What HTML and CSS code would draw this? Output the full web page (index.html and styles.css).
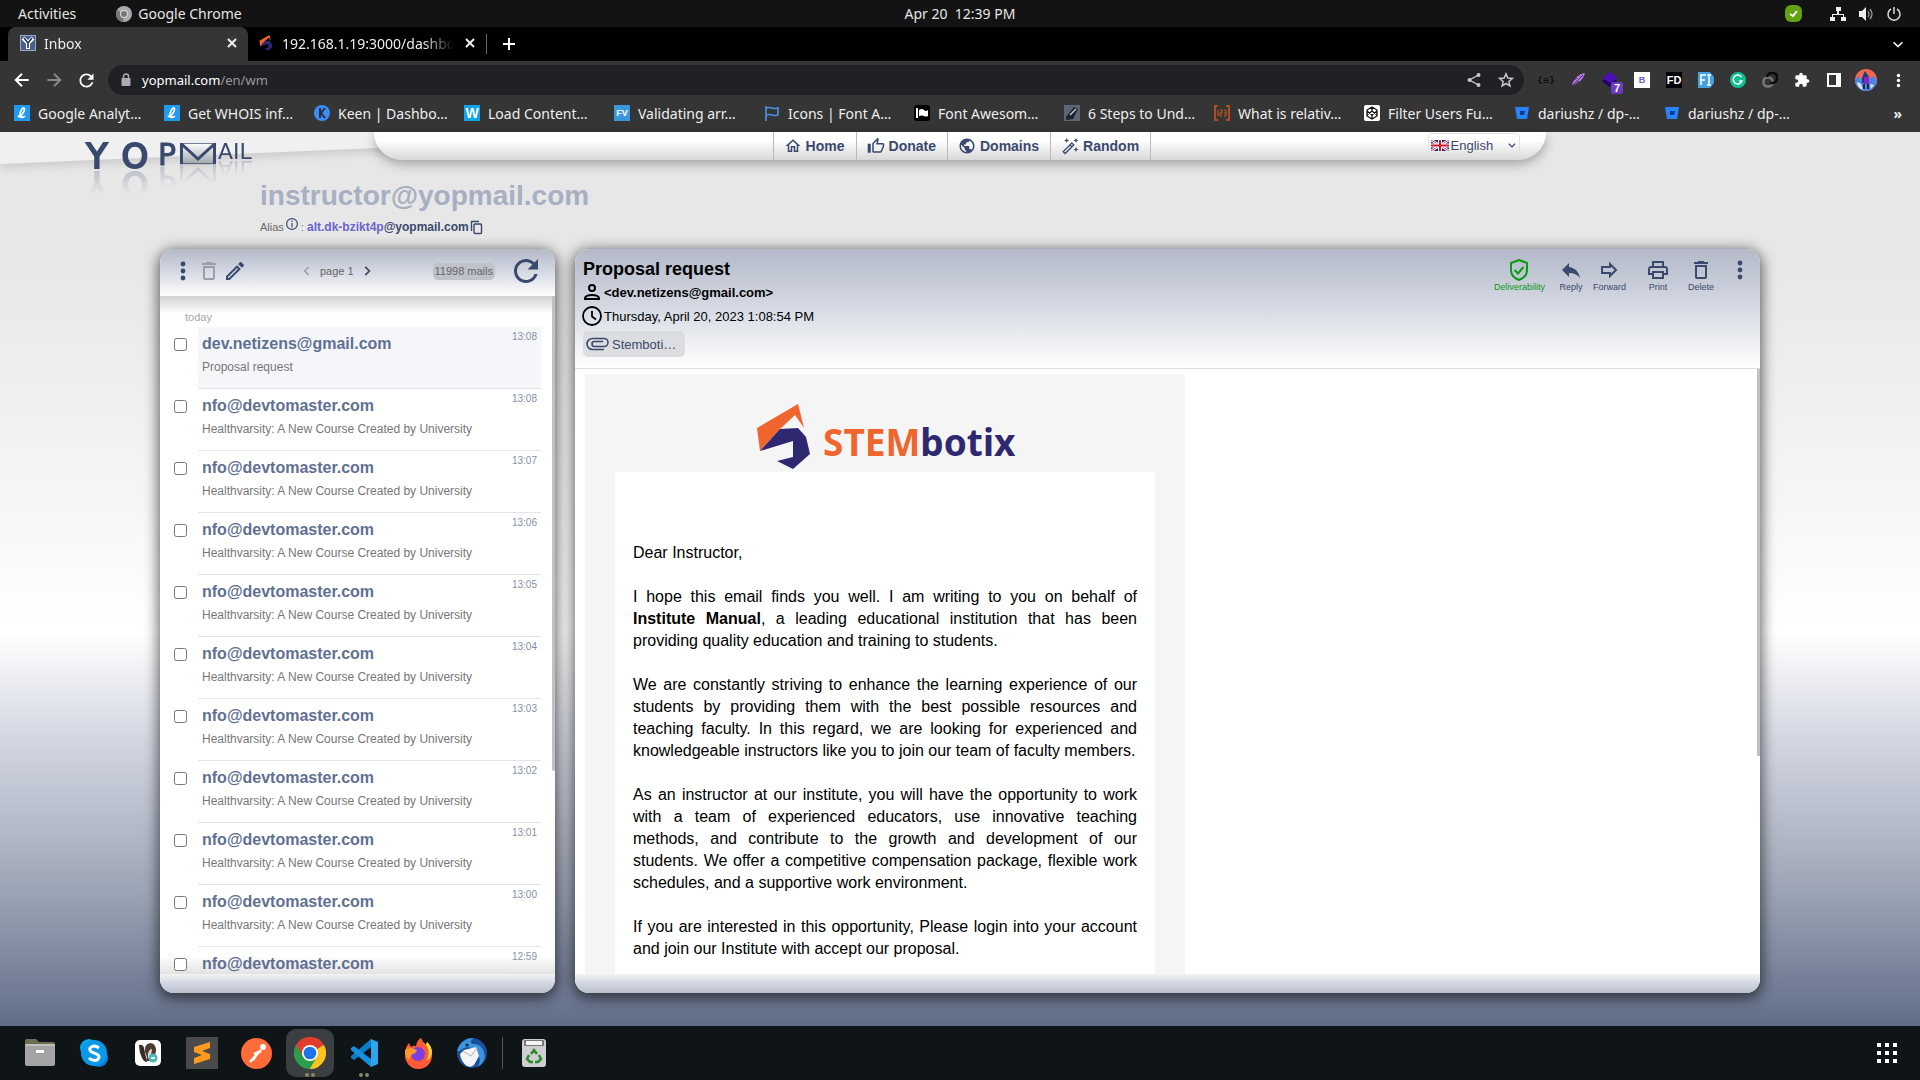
FILE: index.html
```html
<!DOCTYPE html>
<html lang="en">
<head>
<meta charset="utf-8">
<title>Inbox</title>
<link rel="stylesheet" href="styles.css">
</head>
<body>
<svg class="defs" aria-hidden="true">
  <symbol id="dots" viewBox="0 0 24 24"><circle cx="12" cy="5" r="2.4"/><circle cx="12" cy="12" r="2.4"/><circle cx="12" cy="19" r="2.4"/></symbol>
  <symbol id="trash" viewBox="0 0 24 24"><path d="M6 19c0 1.100.9 2 2 2h8c1.100 0 2-.9 2-2V7H6v12zM8 9h8v10H8V9zm7.500-5l-1-1h-5l-1 1H5v2h14V4h-3.500z"/></symbol>
  <symbol id="close" viewBox="0 0 16 16"><path d="M4 4l8 8M12 4l-8 8" fill="none" stroke="currentColor" stroke-width="2"/></symbol>
  <symbol id="left" viewBox="0 0 24 24"><path d="M15 5l-7 7 7 7" fill="none" stroke="currentColor" stroke-width="2.500"/></symbol>
  <symbol id="right" viewBox="0 0 24 24"><path d="M9 5l7 7-7 7" fill="none" stroke="currentColor" stroke-width="3"/></symbol>
  <symbol id="down" viewBox="0 0 16 16"><path d="M3 6l5 5 5-5" fill="none" stroke="currentColor" stroke-width="2"/></symbol>
  <symbol id="stem" viewBox="0 0 54 66"><path fill="#f0652d" d="M0 24L41 0l6 24-9-13L23 25 3 47z"/><path fill="#2e2870" d="M23 25l18-1 8 9 4 17-17 15-16-8 16-4V37L3 47z"/></symbol>
  <symbol id="bucket" viewBox="0 0 16 16"><path fill="#2684ff" d="M1 2h14l-2 12H3z"/><path fill="#123a80" d="M6 6h5l-1 4H6z"/></symbol>
  <symbol id="linkedl" viewBox="0 0 16 16"><rect width="16" height="16" fill="#1f9bf0"/><path d="M5 12c5-3 6-8 5-9S6 6 6 10c0 3 3 3 5 1M4 12c1-2 3-1 4 0" fill="none" stroke="#fff" stroke-width="1.700"/></symbol>
</svg>

<header class="sysbar">
  <div class="sys-left"><button>Activities</button>
    <button class="sys-app"><svg width="16" height="16" viewBox="0 0 16 16"><circle cx="8" cy="8" r="8" fill="#aaa"/><path d="M8 8L1 4a8 8 0 0 0 6 12z" fill="#777"/><circle cx="8" cy="8" r="4" fill="#ddd"/><circle cx="8" cy="8" r="3" fill="#777"/></svg>Google Chrome</button></div>
  <time>Apr 20&nbsp; 12:39 PM</time>
  <div class="sys-right">
    <svg class="skype-tray" width="17" height="17" viewBox="0 0 17 17"><rect width="17" height="17" rx="6" fill="#62a313"/><path d="M5 9l3 2 4-5" fill="none" stroke="#fff" stroke-width="2"/></svg>
    <svg width="16" height="16" viewBox="0 0 16 16" fill="#eee"><path d="M6 1h5v4H9v3h5v3h2v4h-5v-4h2V9H3v2h2v4H0v-4h2V8h5V5H6z"/></svg>
    <svg width="16" height="16" viewBox="0 0 16 16"><path d="M1 5h3l4-4v14l-4-4H1z" fill="#eee"/><path d="M10 5q2 3 0 6M12 3q4 5 0 10" fill="none" stroke="#999" stroke-width="1.300"/></svg>
    <svg width="16" height="16" viewBox="0 0 16 16"><path d="M5 3a6 6 0 1 0 6 0M8 1v7" fill="none" stroke="#ddd" stroke-width="1.500"/></svg>
  </div>
</header>

<nav class="tabs" aria-label="Browser tabs">
  <div class="tab active"><svg width="16" height="16" viewBox="0 0 16 16"><rect x=".5" y=".5" width="15" height="15" fill="#4a5f8c" stroke="#9aa8c4"/><path d="M3 3l5 5 5-5M8 8v6" fill="none" stroke="#fff" stroke-width="4"/><path d="M4 3l4 5 4-5M8 8v5" fill="none" stroke="#26365e" stroke-width="1.600"/></svg><span>Inbox</span><button aria-label="Close tab"><svg width="16" height="16"><use href="#close"/></svg></button></div>
  <div class="tab"><svg width="16" height="16"><use href="#stem"/></svg><span>192.168.1.19:3000/dashboard</span><button aria-label="Close tab"><svg width="16" height="16"><use href="#close"/></svg></button></div>
  <button class="new-tab" aria-label="New tab"><svg width="16" height="16" viewBox="0 0 16 16"><path d="M8 2v12M2 8h12" stroke="#fff" stroke-width="2"/></svg></button>
  <button class="tab-search" aria-label="Search tabs"><svg width="14" height="14"><use href="#down"/></svg></button>
</nav>

<div class="toolbar">
  <button aria-label="Back"><svg width="20" height="20" viewBox="0 0 24 24"><path d="M20 12H5M12 4.500L4.500 12l7.500 7.500" fill="none" stroke="#fff" stroke-width="2.300"/></svg></button>
  <button aria-label="Forward"><svg width="20" height="20" viewBox="0 0 24 24"><path d="M4 12h15M12 4.500l7.500 7.500-7.500 7.500" fill="none" stroke="#888" stroke-width="2.300"/></svg></button>
  <button aria-label="Reload"><svg width="21" height="21" viewBox="0 0 24 24" fill="#fff"><path d="M17.650 6.350C16.200 4.900 14.210 4 12 4c-4.420 0-7.990 3.580-7.990 8s3.570 8 7.990 8c3.730 0 6.840-2.550 7.730-6h-2.080c-.82 2.330-3.040 4-5.650 4-3.310 0-6-2.690-6-6s2.690-6 6-6c1.660 0 3.140.69 4.220 1.780L13 11h7V4l-2.350 2.350z"/></svg></button>
  <div class="omnibox">
    <svg width="12" height="14" viewBox="0 0 12 14"><rect x="1.500" y="5" width="9" height="8" rx="1" fill="#aaaeb3"/><path d="M3.500 5V3.500a2.500 2.500 0 0 1 5 0V5" fill="none" stroke="#aaaeb3" stroke-width="1.500"/></svg>
    <a href="#">yopmail.com<span>/en/wm</span></a>
    <button aria-label="Share"><svg width="16" height="16" viewBox="0 0 16 16" fill="#c8c8c8"><path d="M12.500 3L3.500 8l9 5" fill="none" stroke="#c8c8c8" stroke-width="1.400"/><circle cx="12.500" cy="3" r="2"/><circle cx="3.500" cy="8" r="2"/><circle cx="12.500" cy="13" r="2"/></svg></button>
    <button aria-label="Bookmark"><svg width="16" height="16" viewBox="0 0 16 16"><path d="M8 1.800l1.800 4.200 4.500.4-3.400 3 1 4.500L8 11.500l-3.900 2.400 1-4.500-3.400-3 4.500-.4z" fill="none" stroke="#c8c8c8" stroke-width="1.500"/></svg></button>
  </div>
  <div class="extensions">
    <button class="ext-json" aria-label="JSON formatter">{≡}</button>
    <button aria-label="Feather"><svg width="16" height="16" viewBox="0 0 16 16"><path d="M15 1C9 2 4 6 2 13c6-1 11-5 13-12z" fill="#b779dd"/><path d="M1 15L13 3M5 13l4-4M4 8l3-2" stroke="#4c2768" fill="none"/></svg></button>
    <button class="ext-layers" aria-label="Layers"><svg width="18" height="18" viewBox="0 0 18 18"><path d="M8 5l8 5-8 6-7-6z" fill="#22006a"/><path d="M9 1l8 6-7 5-9-5z" fill="#4b10b8"/></svg><b>7</b></button>
    <button aria-label="Bootstrap"><i class="tile white">B</i></button>
    <button aria-label="FD"><i class="tile black">FD</i></button>
    <button aria-label="Fonts"><svg width="16" height="16" viewBox="0 0 16 16"><path d="M0 0h12l4 5v6l-4 5H0z" fill="#45a1df"/><path d="M3 13V3h5M3 8h4M9 3h4M11 3v10M9 13h4" fill="none" stroke="#fff" stroke-width="1.500"/></svg></button>
    <button aria-label="Grammar"><svg width="16" height="16" viewBox="0 0 16 16"><circle cx="8" cy="8" r="8" fill="#11bf94"/><path d="M11.500 5A4.500 4.500 0 1 0 12 9H9" fill="none" stroke="#fff" stroke-width="1.500"/></svg></button>
    <button aria-label="Link"><svg width="16" height="16" viewBox="0 0 16 16" fill="none" stroke-width="2.500"><rect x="1.500" y="5.500" width="9" height="9" rx="4" stroke="#777"/><path d="M5 5q1-4 5-4 5 0 5 4 0 6-5 6H8" stroke="#0b0b0b"/></svg></button>
    <button aria-label="Extensions"><svg width="16" height="16" viewBox="0 0 24 24" fill="#fff"><path d="M20.500 11H19V7c0-1.100-.9-2-2-2h-4V3.500C13 2.120 11.880 1 10.500 1S8 2.120 8 3.500V5H4c-1.100 0-1.990.9-1.990 2v3.800H3.500c1.490 0 2.700 1.210 2.700 2.700s-1.210 2.700-2.700 2.700H2V20c0 1.100.9 2 2 2h3.800v-1.500c0-1.490 1.210-2.700 2.700-2.700 1.490 0 2.700 1.210 2.700 2.700V22H17c1.100 0 2-.9 2-2v-4h1.500c1.380 0 2.500-1.120 2.500-2.500S21.880 11 20.500 11z"/></svg></button>
    <button aria-label="Side panel"><svg width="14" height="14" viewBox="0 0 14 14"><rect x="1" y="1" width="12" height="12" fill="none" stroke="#fff" stroke-width="2"/><rect x="9" width="5" height="14" fill="#fff"/></svg></button>
    <button aria-label="Profile"><svg width="22" height="22" viewBox="0 0 22 22"><circle cx="11" cy="11" r="11" fill="#f2684f"/><path d="M0 11l3-4 3 4 4-9 4 8 4-3 4 4a11 11 0 0 1-22 0z" fill="#4d86e0"/><path d="M3 13l3 2 2 6q-5-2-6-7zM15 15l4 1-3 4z" fill="#d8e4ff"/><path d="M10 2l4 6-1 6H7V9z" fill="#173b86"/><rect x="9" y="8" width="5" height="7" fill="#8a22c8"/><path d="M9 15v5M13 15v5" stroke="#111" stroke-width="1.500"/></svg></button>
    <button aria-label="Menu"><svg width="17" height="17" fill="#fff"><use href="#dots"/></svg></button>
  </div>
</div>

<nav class="bookmarks" aria-label="Bookmarks">
  <a href="#"><svg width="16" height="16"><use href="#linkedl"/></svg>Google Analyt…</a>
  <a href="#"><svg width="16" height="16"><use href="#linkedl"/></svg>Get WHOIS inf…</a>
  <a href="#"><svg width="16" height="16" viewBox="0 0 16 16"><circle cx="8" cy="8" r="8" fill="#3b8cf5"/><path d="M6 3v10M11 3L7 8l4 5" fill="none" stroke="#2b2f3a" stroke-width="2"/></svg>Keen | Dashbo…</a>
  <a href="#"><i class="tile cyan">W</i>Load Content…</a>
  <a href="#"><i class="tile blue">FV</i>Validating arr…</a>
  <a href="#"><svg width="16" height="16" viewBox="0 0 16 16"><path d="M2 1v15M2 3q4-1 6 0t6 0v7q-3 1-6 0t-6 0" fill="none" stroke="#4a8ee0" stroke-width="1.700"/></svg>Icons | Font A…</a>
  <a href="#"><svg width="16" height="16" viewBox="0 0 16 16"><rect width="16" height="16" rx="3"/><path d="M2 3h2v10H2zM5 5q3-2 5 0t4 0v6q-2 1-4 0t-5 0z" fill="#fff"/></svg>Font Awesom…</a>
  <a href="#"><svg width="16" height="16" viewBox="0 0 16 16"><rect width="16" height="16" fill="#5d6675"/><path d="M2 12L10 2l4 2-5 10-7 1z" fill="#1c222c"/><path d="M6 10l6-6" stroke="#c5ccd6" stroke-width="1.500"/></svg>6 Steps to Und…</a>
  <a href="#"><svg width="16" height="16" viewBox="0 0 16 16" fill="none" stroke="#d4561a"><path d="M4 1H1v14h3M12 1h3v14h-3" stroke-width="1.500"/><path d="M4 5v6M6 5h2v3H6v3h2M10 5h2v6h-2M10 8h2"/></svg>What is relativ…</a>
  <a href="#"><svg width="16" height="16" viewBox="0 0 16 16"><rect width="16" height="16" rx="2" fill="#fff"/><path d="M8 2l5 3v6l-5 3-5-3V5zM3 6l5 4 5-4M3 10l5-4 5 4M8 2v4M8 10v4" fill="none" stroke="#111" stroke-width="1.300"/></svg>Filter Users Fu…</a>
  <a href="#"><svg width="16" height="16"><use href="#bucket"/></svg>dariushz / dp-…</a>
  <a href="#"><svg width="16" height="16"><use href="#bucket"/></svg>dariushz / dp-…</a>
  <button aria-label="More bookmarks">»</button>
</nav>

<main class="page">
  <svg class="swoosh" viewBox="0 0 748 32" preserveAspectRatio="none" aria-hidden="true"><path d="M0 0h748L0 32z" fill="#f0f0f0"/></svg>
  <div class="masthead">
    <a class="logo" href="#" aria-label="YOPmail"><span class="big">Y</span><span class="big">O</span><span class="mid">P</span><svg width="36" height="21" viewBox="0 0 36 21"><defs><linearGradient id="env" x2="0" y2="1"><stop stop-color="#fff"/><stop offset="1" stop-color="#9fa6a8"/></linearGradient></defs><path d="M0 0h36v21H0z" fill="url(#env)"/><path d="M1.500 21V1l16.500 15L34.500 1v20" fill="none" stroke="#3a4a6e" stroke-width="3"/><path d="M0 .5h36M0 20.500h36" stroke="#3a4a6e" stroke-opacity=".7"/></svg><span class="small">AIL</span></a>
    <nav class="menu" aria-label="Site">
      <a href="#"><svg width="18" height="18" viewBox="0 0 24 24"><path d="M12 5.690l5 4.500V18h-2v-6H9v6H7v-7.810l5-4.500M12 3L2 12h3v8h6v-6h2v6h6v-8h3L12 3z"/></svg>Home</a>
      <a href="#"><svg width="18" height="18" viewBox="0 0 24 24"><path d="M9 21h9c.83 0 1.540-.5 1.840-1.220l3.020-7.050c.09-.23.14-.47.14-.73v-2c0-1.100-.9-2-2-2h-6.310l.95-4.570.03-.32c0-.41-.17-.79-.44-1.060L14.170 1 7.580 7.590C7.220 7.950 7 8.450 7 9v10c0 1.100.9 2 2 2zM9 9l4.340-4.340L12 10h9v2l-3 7H9V9zM1 9h4v12H1z"/></svg>Donate</a>
      <a href="#"><svg width="18" height="18" viewBox="0 0 24 24"><path d="M12 2C6.480 2 2 6.480 2 12s4.480 10 10 10 10-4.480 10-10S17.520 2 12 2zm-1 17.930c-3.950-.49-7-3.850-7-7.930 0-.62.08-1.210.21-1.790L9 15v1c0 1.100.9 2 2 2v1.930zm6.900-2.540c-.26-.81-1-1.390-1.900-1.390h-1v-3c0-.55-.45-1-1-1H8v-2h2c.55 0 1-.45 1-1V7h2c1.100 0 2-.9 2-2v-.41c2.930 1.190 5 4.060 5 7.410 0 2.080-.8 3.970-2.100 5.390z"/></svg>Domains</a>
      <a href="#"><svg width="18" height="18" viewBox="0 0 24 24"><path d="M3 19.500L14.500 8l2.500 2.500L5.500 22zM12 10.500l2.500 2.500" fill="none" stroke="currentColor" stroke-width="1.800"/><path d="M7.500 1l1 2.500L11 4.500 8.500 5.500l-1 2.500-1-2.500L4 4.500l2.500-1zM20 1l1 2.500 2.500 1-2.500 1L20 8l-1-2.500-2.500-1 2.500-1zM20 13l1 2.500 2.500 1-2.500 1L20 20l-1-2.500-2.500-1 2.500-1z"/></svg>Random</a>
      <label class="lang"><svg width="18" height="11" viewBox="0 0 18 11"><path fill="#14307e" d="M0 0h18v11H0z"/><path d="M0 0l18 11M18 0L0 11" stroke="#fff" stroke-width="2.500"/><path d="M0 0l18 11M18 0L0 11" stroke="#d4142c" stroke-width=".8"/><path d="M9 0v11M0 5.500h18" stroke="#fff" stroke-width="4"/><path d="M9 0v11M0 5.500h18" stroke="#d4142c" stroke-width="2"/></svg><select aria-label="Language"><option>English</option></select><svg width="10" height="10"><use href="#down"/></svg></label>
    </nav>
    <div class="account">
      <h1>instructor@yopmail.com</h1>
      <p>Alias<svg class="info" width="14" height="14" viewBox="0 0 14 14"><circle cx="7" cy="7" r="5.400" fill="none" stroke="currentColor" stroke-width="1.200"/><path d="M7 6v4.500M7 3.500v1.500" stroke="currentColor" stroke-width="1.200"/></svg>:&nbsp;<b><em>alt.dk-bzikt4p</em>@yopmail.com</b><button aria-label="Copy"><svg width="14" height="15" viewBox="0 0 14 15" fill="none" stroke="currentColor" stroke-width="1.400"><path d="M2.500 11V1.500H10"/><rect x="5" y="4" width="7.500" height="9.500" rx="1"/></svg></button></p>
    </div>
  </div>

  <div class="panels">
    <section class="panel inbox" aria-label="Inbox">
      <div class="inbox-bar">
        <button aria-label="More"><svg width="24" height="24"><use href="#dots"/></svg></button>
        <button class="off" aria-label="Delete"><svg width="24" height="24"><use href="#trash"/></svg></button>
        <button aria-label="Compose"><svg width="24" height="24" viewBox="0 0 24 24"><path d="M14.060 9.020l.92.92L5.920 19H5v-.92l9.060-9.060M17.660 3c-.25 0-.51.1-.7.29l-1.830 1.830 3.750 3.750 1.830-1.830c.39-.39.39-1.020 0-1.410l-2.340-2.340c-.2-.2-.45-.29-.71-.29zm-3.600 3.190L3 17.250V21h3.750L17.810 9.940l-3.750-3.750z"/></svg></button>
        <div class="pager"><button class="off" aria-label="Previous"><svg width="14" height="14"><use href="#left"/></svg></button><span>page 1</span><button aria-label="Next"><svg width="14" height="14"><use href="#right"/></svg></button></div>
        <span class="count">11998 mails</span>
        <button aria-label="Refresh"><svg width="36" height="36" viewBox="0 0 24 24"><path d="M17.650 6.350C16.200 4.900 14.210 4 12 4c-4.420 0-7.990 3.580-7.990 8s3.570 8 7.990 8c3.730 0 6.840-2.550 7.730-6h-2.080c-.82 2.330-3.040 4-5.650 4-3.310 0-6-2.690-6-6s2.690-6 6-6c1.660 0 3.140.69 4.220 1.780L13 11h7V4l-2.350 2.350z"/></svg></button>
      </div>
      <div class="list">
        <h2>today</h2>
        <div class="mail current"><input type="checkbox" aria-label="Select message"><a href="#"><time>13:08</time><b>dev.netizens@gmail.com</b><span>Proposal request</span></a></div>
        <div class="mail"><input type="checkbox" aria-label="Select message"><a href="#"><time>13:08</time><b>nfo@devtomaster.com</b><span>Healthvarsity: A New Course Created by University</span></a></div>
        <div class="mail"><input type="checkbox" aria-label="Select message"><a href="#"><time>13:07</time><b>nfo@devtomaster.com</b><span>Healthvarsity: A New Course Created by University</span></a></div>
        <div class="mail"><input type="checkbox" aria-label="Select message"><a href="#"><time>13:06</time><b>nfo@devtomaster.com</b><span>Healthvarsity: A New Course Created by University</span></a></div>
        <div class="mail"><input type="checkbox" aria-label="Select message"><a href="#"><time>13:05</time><b>nfo@devtomaster.com</b><span>Healthvarsity: A New Course Created by University</span></a></div>
        <div class="mail"><input type="checkbox" aria-label="Select message"><a href="#"><time>13:04</time><b>nfo@devtomaster.com</b><span>Healthvarsity: A New Course Created by University</span></a></div>
        <div class="mail"><input type="checkbox" aria-label="Select message"><a href="#"><time>13:03</time><b>nfo@devtomaster.com</b><span>Healthvarsity: A New Course Created by University</span></a></div>
        <div class="mail"><input type="checkbox" aria-label="Select message"><a href="#"><time>13:02</time><b>nfo@devtomaster.com</b><span>Healthvarsity: A New Course Created by University</span></a></div>
        <div class="mail"><input type="checkbox" aria-label="Select message"><a href="#"><time>13:01</time><b>nfo@devtomaster.com</b><span>Healthvarsity: A New Course Created by University</span></a></div>
        <div class="mail"><input type="checkbox" aria-label="Select message"><a href="#"><time>13:00</time><b>nfo@devtomaster.com</b><span>Healthvarsity: A New Course Created by University</span></a></div>
        <div class="mail"><input type="checkbox" aria-label="Select message"><a href="#"><time>12:59</time><b>nfo@devtomaster.com</b></a></div>
      </div>
      <div class="panel-foot"></div>
    </section>

    <section class="panel reader" aria-label="Message">
      <div class="reader-head">
        <div class="meta">
          <h2>Proposal request</h2>
          <p><svg width="20" height="20" viewBox="0 0 20 20" fill="none" stroke="#000" stroke-width="2"><circle cx="10" cy="6" r="3"/><path d="M3 17v-1q1-3 7-3t7 3v1z"/></svg><b>&lt;dev.netizens@gmail.com&gt;</b></p>
          <p><svg width="20" height="20" viewBox="0 0 20 20" fill="none" stroke="#000" stroke-width="1.800"><circle cx="10" cy="10" r="9"/><path d="M10 5v5.500l4 3"/></svg>Thursday, April 20, 2023 1:08:54 PM</p>
          <a class="attachment" href="#"><svg width="23" height="14" viewBox="0 0 23 14" fill="none" stroke="currentColor" stroke-width="1.600"><path d="M18 12.500H6.500a5.500 5.500 0 0 1 0-11H18a4 4 0 0 1 0 8H8.500a2.500 2.500 0 0 1 0-5H17"/></svg>Stemboti…</a>
        </div>
        <div class="actions">
          <button class="good"><svg width="24" height="24" viewBox="0 0 24 24" fill="none" stroke="currentColor" stroke-width="2"><path d="M12 2l8 3v7c0 5-4 8.500-8 10-4-1.500-8-5-8-10V5z"/><path d="M7.500 12l3.500 3.500L16.500 9"/></svg>Deliverability</button>
          <div class="pair">
          <button><svg width="24" height="24" viewBox="0 0 24 24"><path d="M10 9V5l-7 7 7 7v-4.100c5 0 8.500 1.600 11 5.100-1-5-4-10-11-11z"/></svg>Reply</button>
          <button><svg width="24" height="24" viewBox="0 0 24 24"><path d="M5 9h8V6l6 6-6 6v-3H5z" fill="none" stroke="currentColor" stroke-width="2"/></svg>Forward</button>
          </div>
          <div class="tools">
          <button><svg width="24" height="24" viewBox="0 0 24 24"><path d="M19 8h-1V3H6v5H5c-1.660 0-3 1.340-3 3v6h4v4h12v-4h4v-6c0-1.660-1.340-3-3-3zM8 5h8v3H8V5zm8 12v2H8v-4h8v2zm2-2v-2H6v2H4v-4c0-.55.45-1 1-1h14c.55 0 1 .45 1 1v4h-2z"/></svg>Print</button>
          <button><svg width="24" height="24"><use href="#trash"/></svg>Delete</button>
          </div>
          <button aria-label="More"><svg width="24" height="24"><use href="#dots"/></svg></button>
        </div>
      </div>
      <div class="reader-body">
        <article class="email">
          <svg class="brand" width="264" height="70" viewBox="0 0 264 70" role="img" aria-label="STEMbotix"><use href="#stem" x="4" y="2" width="54" height="66"/><text x="70" y="54"><tspan class="brand-stem">STEM</tspan><tspan class="brand-botix">botix</tspan></text></svg>
          <div class="letter">
            <p>Dear Instructor,</p>
            <p>I hope this email finds you well. I am writing to you on behalf of <b>Institute Manual</b>, a leading educational institution that has been providing quality education and training to students.</p>
            <p>We are constantly striving to enhance the learning experience of our students by providing them with the best possible resources and teaching faculty. In this regard, we are looking for experienced and knowledgeable instructors like you to join our team of faculty members.</p>
            <p>As an instructor at our institute, you will have the opportunity to work with a team of experienced educators, use innovative teaching methods, and contribute to the growth and development of our students. We offer a competitive compensation package, flexible work schedules, and a supportive work environment.</p>
            <p>If you are interested in this opportunity, Please login into your account and join our Institute with accept our proposal.</p>
          </div>
        </article>
      </div>
      <div class="panel-foot"></div>
    </section>
  </div>
</main>

<footer class="dock">
  <button aria-label="Files"><svg width="32" height="32" viewBox="0 0 32 32"><path d="M1 9V4q0-2 2-2h9l3 3h14q2 0 2 2v6z" fill="#6d6d52"/><rect x="1" y="7" width="30" height="22" rx="2" fill="#a3a3a3"/><path d="M1 8h30" stroke="#ddd"/><rect x="12" y="13" width="8" height="3" fill="#fff"/></svg></button>
  <button aria-label="Skype"><svg width="30" height="30" viewBox="0 0 30 30"><circle cx="10" cy="10" r="9" fill="#0aa5e8"/><circle cx="20" cy="20" r="9" fill="#0a7fe0"/><circle cx="15" cy="15" r="13" fill="#0998ea"/><path d="M20 10q-5-4-9 0c-2 6 9 4 9 9-1 5-7 4-10 1" fill="none" stroke="#fff" stroke-width="3"/></svg></button>
  <button aria-label="DBeaver"><svg width="26" height="26" viewBox="0 0 26 26"><rect width="26" height="26" rx="5" fill="#fff"/><path d="M4 5q4-1 5 3l3 14q-3 0-5-4Q4 12 4 5z" fill="#3b2b26"/><path d="M10 12q-1-8 5-9 6 0 6 8-1 8-6 10h-4q2-4-1-9z" fill="#4d3a32"/><path d="M13 14q1-5 4-5l-1 6-3 4z" fill="#e4ddd8"/><circle cx="18" cy="18" r="4.500" fill="#4db6b6"/><path d="M16 18h4" stroke="#d8ffff" stroke-width="2"/></svg></button>
  <button aria-label="Sublime Text"><svg width="32" height="32" viewBox="0 0 32 32"><rect width="32" height="32" fill="#4a4a4a"/><path d="M8 10l16-5v6l-8 3 8 3v5L8 27v-6l8-3-8-3z" fill="#ff9a1f"/></svg></button>
  <button aria-label="Postman"><svg width="31" height="31" viewBox="0 0 31 31"><circle cx="15.500" cy="15.500" r="15.500" fill="#ff6c37"/><circle cx="22" cy="9" r="3" fill="#fff"/><path d="M20 12L9 24M20 13l-7 3M16 16l-4 6" stroke="#fff" stroke-width="2.500"/></svg></button>
  <button class="running focused" aria-label="Chrome"><svg width="32" height="32" viewBox="0 0 32 32"><path d="M16 16L2.100 8A16 16 0 0 1 29.900 8z" fill="#e33b2e"/><path d="M16 16L29.900 8A16 16 0 0 1 16 32z" fill="#fcc31e"/><path d="M16 16v16A16 16 0 0 1 2.100 8z" fill="#2a9e4b"/><path d="M2.100 8L9 20l7-4V8z" fill="#e33b2e"/><path d="M9 20L2.100 8q-1 2-1 3l7 12z" fill="#2a9e4b"/><path d="M16 32l7-12-7-2-6 6z" fill="#2a9e4b"/><path d="M23 20l-7 12q6 0 9-3V18z" fill="#fcc31e"/><circle cx="16" cy="16" r="8" fill="#fff"/><circle cx="16" cy="16" r="6.300" fill="#1a73e8"/></svg></button>
  <button class="running" aria-label="Visual Studio Code"><svg width="30" height="30" viewBox="0 0 30 30"><path d="M22 1l7 3v22l-7 3z" fill="#2ca5ee"/><path d="M22 1v8L5 22l-3-2v-2z" fill="#0a7cc8"/><path d="M22 29v-8L5 8l-3 2v2z" fill="#1690dc"/></svg></button>
  <button aria-label="Firefox"><svg width="30" height="32" viewBox="0 0 30 32"><path d="M2 18Q2 10 6 6l2 4q3-2 5-1 1-6 5-8 1 4 5 7l1-3q6 7 5 14a13.500 13.500 0 0 1-27-1z" fill="#ff5a36"/><path d="M18 1q1 5 6 8 4 8-1 15 6-3 6-10Q28 8 24 5l-1 3q-4-3-5-7z" fill="#ffd93b"/><circle cx="15" cy="17" r="7" fill="#7a3fe0"/><path d="M3 12l5-1 6 2q-1 4-5 4l-3 6Q2 20 2 14z" fill="#ff9a2a"/></svg></button>
  <button aria-label="Thunderbird"><svg width="32" height="32" viewBox="0 0 32 32"><circle cx="16" cy="16" r="15" fill="#1b4f9c"/><path d="M1 14Q5 1 18 1q-5 3-2 6 9-1 12 8 3 9-6 15 4-7-1-15Q12 6 4 14z" fill="#3a93dd"/><path d="M4 17l4-4 12-3 3 9-5 9q-3 3-7 1-6-4-7-12z" fill="#f4f4f4"/><path d="M7 14l8 5 6-8" fill="none" stroke="#b0b0b0"/><circle cx="11" cy="8" r="1.500" fill="#123"/></svg></button>
  <hr>
  <button aria-label="Trash"><svg width="26" height="30" viewBox="0 0 26 30"><rect x="1" y="1" width="24" height="28" rx="3" fill="#cfcfcf"/><rect x="3" y="2" width="20" height="6" rx="1" fill="#777"/><path d="M5 3h16v4H5z" fill="#f4f4f4"/><path d="M10 16l3-4 3 4M18 17l2 4-3 3M8 17l-2 4 3 3h3M14 24h3" fill="none" stroke="#2d8a2d" stroke-width="2.500"/></svg></button>
  <button class="apps" aria-label="Show applications"><svg width="22" height="22" viewBox="0 0 22 22" fill="#fff"><path d="M1 1h4v4H1zM9 1h4v4H9zM17 1h4v4h-4zM1 9h4v4H1zM9 9h4v4H9zM17 9h4v4h-4zM1 17h4v4H1zM9 17h4v4H9zM17 17h4v4h-4z"/></svg></button>
</footer>
</body>
</html>
```
FILE: styles.css
```css
* { box-sizing: border-box; }

body {
  margin: 0;
  height: 100vh;
  display: flex;
  flex-direction: column;
  overflow: hidden;
  font-family: "Liberation Sans", Arial, sans-serif;
  background: #353535;
}

h1, h2, p { margin: 0; }
a { color: inherit; text-decoration: none; }
svg { flex: none; display: block; }

button {
  padding: 0;
  border: 0;
  background: none;
  color: inherit;
  font: inherit;
  display: flex;
  align-items: center;
  justify-content: center;
}

.defs { position: absolute; width: 0; height: 0; }

/* Desktop top bar */
.sysbar {
  flex: none;
  height: 27px;
  padding: 0 18px;
  display: grid;
  grid-template-columns: 1fr auto 1fr;
  align-items: center;
  background: #131313;
  color: #e6e6e6;
  font: 14px "Noto Sans", sans-serif;
}
.sysbar time { padding-bottom: 1px; }
.sys-left, .sys-right { display: flex; align-items: center; }
.sys-left { gap: 40px; }
.sys-app { gap: 6px; }
.sys-right { justify-content: flex-end; gap: 12px; }
.skype-tray { margin-right: 16px; }

/* Browser chrome */
.tabs {
  flex: none;
  height: 34px;
  padding: 0 15px 0 8px;
  display: flex;
  align-items: center;
  background: #000;
  color: #eee;
  font: 14px "Noto Sans", sans-serif;
}
.tab {
  width: 240px;
  height: 34px;
  padding: 0 8px 2px 12px;
  display: flex;
  align-items: center;
  gap: 8px;
  border-radius: 8px 8px 0 0;
}
.tab.active { background: #353535; }
.tab:not(.active) { width: 238px; padding-left: 10px; }
.tab span {
  flex: 1;
  overflow: hidden;
  white-space: nowrap;
  mask-image: linear-gradient(to right, #000 82%, transparent);
}
.new-tab { width: 44px; height: 20px; border-left: 1px solid #666; }
.tab-search { margin-left: auto; }

.toolbar {
  flex: none;
  height: 38px;
  padding: 0 6px;
  display: flex;
  align-items: center;
}
.toolbar > button { width: 32px; }
.omnibox {
  flex: 1;
  height: 30px;
  margin: 0 6px;
  padding: 0 10px 0 12px;
  display: flex;
  align-items: center;
  gap: 16px;
  border-radius: 15px;
  background: #202124;
  color: #fff;
  font: 13px "Noto Sans", sans-serif;
}
.omnibox a { flex: 1; margin-left: -6px; }
.omnibox a span { color: #9a9a9a; }
.extensions { display: flex; }
.extensions button { width: 32px; height: 30px; }
.ext-json { color: #111; font: bold 8px "DejaVu Sans", sans-serif; }
.ext-layers { position: relative; }
.ext-layers b {
  position: absolute;
  right: 3px;
  bottom: 1px;
  width: 12px;
  line-height: 12px;
  border-radius: 2px;
  background: #6c3bc4;
  color: #fff;
  font-size: 11px;
}
.tile {
  flex: none;
  width: 16px;
  text-align: center;
  font: bold 9px/16px "Liberation Sans", sans-serif;
  color: #fff;
}
.tile.white { background: #fff; color: #6a5acd; }
.tile.black { background: #000; font-size: 11px; }
.tile.cyan { background: #0ea5e9; font-size: 14px; }
.tile.blue { background: #3b97dc; }

.bookmarks {
  flex: none;
  height: 33px;
  padding: 0 18px 5px 14px;
  display: flex;
  align-items: center;
  color: #eee;
  font: 14px "Noto Sans", sans-serif;
}
.bookmarks a {
  flex: 0 0 150px;
  display: flex;
  align-items: center;
  gap: 8px;
  white-space: nowrap;
}
.bookmarks button { margin-left: auto; font-weight: bold; }

/* Webmail page */
.page {
  flex: 1;
  min-height: 0;
  position: relative;
  display: flex;
  flex-direction: column;
  padding-bottom: 33px;
  background: linear-gradient(#e7e7e7 14%, #f4f4f4 38%, #fff 56%, #d6dae4 67%, #b3b9c8 78%, #98a1b2 86%, #808ba1 92%, #616c88);
}
.swoosh {
  position: absolute;
  top: 0;
  left: 0;
  width: 39%;
  height: 32px;
  overflow: visible;
  filter: drop-shadow(0 4px 4px rgba(0, 0, 0, .12));
}
.masthead {
  flex: none;
  position: relative;
  height: 117px;
  display: grid;
  grid-template: 28px 1fr / 260px 1fr;
}
.logo {
  grid-area: 1 / 1 / 3 / 2;
  padding: 11px 0 0 78px;
  display: flex;
  align-items: flex-start;
  color: #3a4a6e;
  font-family: "DejaVu Sans", sans-serif;
  text-align: center;
}
.logo span, .logo svg { -webkit-box-reflect: below 0 linear-gradient(transparent 10%, rgba(0, 0, 0, .25)); }
.logo .big { width: 38px; font-size: 34px; line-height: 27px; -webkit-text-stroke: 2px; }
.logo .mid { width: 26px; font-size: 30px; line-height: 23px; -webkit-text-stroke: 1px; }
.logo .small { padding-left: 2px; font-size: 22px; line-height: 17px; }
.menu {
  grid-area: 1 / 1 / 2 / 3;
  justify-self: center;
  width: 61%;
  display: flex;
  border-radius: 0 0 28px 28px;
  background: linear-gradient(#fff 30%, #d8d8d8);
  box-shadow: 0 4px 12px rgba(0, 0, 0, .3);
  color: #3a4a6e;
  font-size: 14px;
  font-weight: bold;
  fill: currentColor;
}
.menu > a {
  padding: 0 11px 0 10px;
  display: flex;
  align-items: center;
  gap: 4px;
  border-right: 1px solid #bbb;
}
.menu > a:first-child { margin-left: 34%; border-left: 1px solid #bbb; }
.lang {
  width: 92px;
  height: 24px;
  margin: 1px 26px 0 auto;
  padding: 0 2px;
  display: flex;
  align-items: center;
  gap: 2px;
  border: 1px solid #e2e2e2;
  border-radius: 4px;
}
.lang select {
  flex: 1;
  min-width: 0;
  padding: 0;
  border: 0;
  appearance: none;
  background: none;
  color: #3a4a6e;
  font: 13px "Liberation Sans", Arial, sans-serif;
}
.account { grid-area: 2 / 2; padding-top: 16px; color: #3a4a6e; }
.account h1 { color: #a7afc3; font-size: 28px; line-height: 40px; }
.account p {
  display: flex;
  align-items: center;
  margin-top: 1px;
  color: #6c6c6c;
  font-size: 11px;
  line-height: 20px;
}
.account .info { margin: 0 2px 6px 1px; color: #3a4a6e; }
.account b { color: #3a4a6e; font-size: 12px; }
.account em { color: #6a63d0; font-style: normal; }
.account button { color: #3a4a6e; }

.panels {
  flex: 1;
  min-height: 0;
  width: 100%;
  max-width: 1600px;
  margin: 0 auto;
  display: flex;
  gap: 20px;
}
.panel {
  display: flex;
  flex-direction: column;
  overflow: hidden;
  border-radius: 14px;
  background: #fff;
  box-shadow: 0 3px 14px 2px rgba(0, 0, 0, .6);
}
.panel-foot { flex: none; height: 19px; background: linear-gradient(#f3f3f3, #d5d9e2 45%, #b9bfcc); }

.inbox { flex: 0 0 395px; }
.inbox-bar {
  flex: none;
  height: 47px;
  padding: 0 11px 4px;
  display: flex;
  align-items: center;
  gap: 2px;
  background: linear-gradient(#b3b9c8, #d6dae4 50%, #fff);
  color: #3a4a6e;
  fill: currentColor;
}
.inbox-bar .off { color: #9b9ea8; }
.pager {
  margin-left: 51px;
  display: flex;
  align-items: center;
  gap: 6px;
  color: #3a4a6e;
  font-size: 11px;
}
.pager span { color: #666; }
.count {
  margin: 2px 11px 0 auto;
  padding: 0 2px;
  border-radius: 5px;
  background: #bfc2ca;
  color: #666;
  font-size: 11px;
  line-height: 17px;
}
.list {
  flex: 1;
  min-height: 0;
  padding: 12px 14px 0 12px;
  overflow: hidden;
  background:
    linear-gradient(#c1c1c1, #c1c1c1) right top / 3px 70% no-repeat,
    linear-gradient(#d2d2d2, rgba(255, 255, 255, 0)) top / 100% 18px no-repeat,
    linear-gradient(rgba(255, 255, 255, 0), #e2e2e2) bottom / 100% 18px no-repeat;
}
.list h2 {
  padding: 0 13px;
  color: #a6a6a6;
  font-size: 11px;
  font-weight: normal;
  line-height: 19px;
}
.mail { display: flex; gap: 11px; }
.mail input { flex: none; width: 13px; height: 13px; margin: 11px 0 0 2px; }
.mail a {
  flex: 1;
  height: 62px;
  padding: 3px 4px;
  border-bottom: 1px solid #e2e4ea;
}
.mail.current a { background: #f4f6f9; }
.mail time { float: right; color: #8790a8; font-size: 10px; line-height: 14px; }
.mail b { display: block; color: #5f7092; font-size: 16px; line-height: 28px; }
.mail span { display: block; color: #777; font-size: 12px; line-height: 18px; }

.reader { flex: 1; min-width: 0; }
.reader-head {
  flex: none;
  padding: 9px 8px 11px;
  display: flex;
  justify-content: space-between;
  align-items: flex-start;
  border-bottom: 1px solid #ddd;
  background: linear-gradient(#b3b9c8, #d6dae4 50%, #fff);
}
.meta h2 { font-size: 18px; line-height: 22px; }
.meta p {
  height: 24px;
  margin-left: -1px;
  display: flex;
  align-items: center;
  gap: 2px;
  font-size: 13px;
}
.attachment {
  width: 102px;
  height: 26px;
  margin-top: 3px;
  padding-left: 3px;
  display: flex;
  align-items: center;
  gap: 3px;
  border-radius: 5px;
  background: #dcdde0;
  color: #3a4a6e;
  font-size: 13px;
}
.actions, .pair, .tools { display: flex; align-items: flex-start; }
.actions { gap: 14px; color: #3a4a6e; fill: currentColor; }
.pair { gap: 10px; padding-right: 6px; }
.tools { gap: 18px; }
.actions button { flex-direction: column; font-size: 9px; line-height: 11px; }
.actions .good { color: #0a9a14; }

.reader-body {
  flex: 1;
  min-height: 0;
  padding: 5px 10px 0;
  overflow: hidden;
  background: linear-gradient(#c1c1c1, #c1c1c1) right top / 3px 64% no-repeat;
}
.email {
  max-width: 600px;
  padding: 28px 30px 30px;
  background: #f5f5f5;
}
.brand { margin: 0 auto; }
.brand text { font: bold 37px "Noto Sans", sans-serif; }
.brand-stem { fill: #f0652d; }
.brand-botix { fill: #2e2870; }
.letter {
  padding: 70px 18px;
  background: #fff;
  font-size: 16px;
  line-height: 22px;
  text-align: justify;
}
.letter p + p { margin-top: 22px; }

/* Desktop dock */
.dock {
  flex: none;
  height: 54px;
  padding: 0 9px 0 16px;
  display: flex;
  align-items: center;
  gap: 6px;
  background: #0f1417;
}
.dock button { position: relative; width: 48px; height: 48px; border-radius: 10px; }
.dock .focused { background: #3b3f42; }
.dock .running::after {
  content: "";
  position: absolute;
  left: 50%;
  bottom: 0;
  width: 4px;
  height: 4px;
  margin-left: -5px;
  border-radius: 50%;
  background: #8a8468;
  box-shadow: 6px 0 #8a8468;
}
.dock hr { width: 1px; height: 32px; margin: 0 1px 0 0; border: 0; background: #555; }
.dock .apps { margin-left: auto; }
```
